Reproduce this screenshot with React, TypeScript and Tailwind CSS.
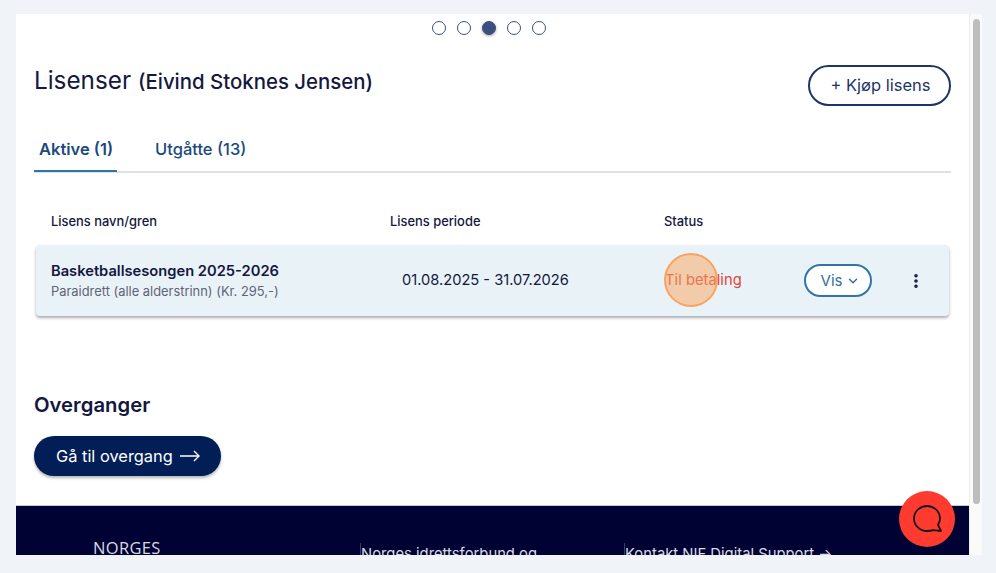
import { ChevronDown, MoreVertical } from 'lucide-react';

const font = { fontFamily: 'Inter, sans-serif' };

function StepDots() {
    return (
        <div className="flex justify-center gap-[11px] pt-[7px] pr-[7px]">
            {[0, 1, 2, 3, 4].map(i => (
                <div
                    key={i}
                    className={`w-[14px] h-[14px] rounded-full border border-[#3b5080] ${i === 2 ? 'bg-[#3b5080] shadow-[0_1px_3px_rgba(0,0,0,0.35)]' : 'bg-white'}`}
                />
            ))}
        </div>
    );
}

function LicenseRow() {
    return (
        <div className="relative mx-[2px] mt-[14px] h-[71px] flex items-center rounded-[4px] bg-[#e9f2f7] shadow-[0_2px_3px_rgba(40,50,70,0.4)]">
            <div className="w-[354px] pl-[15px] shrink-0">
                <div className="text-[14.7px] leading-[20px] font-semibold text-[#14183f]">Basketballsesongen 2025-2026</div>
                <div className="text-[12.9px] leading-[18px] mt-[2px] text-[#5f6577]">Paraidrett (alle alderstrinn) (Kr. 295,-)</div>
            </div>
            <div className="w-[275px] shrink-0 pl-[12px] text-[14.65px] text-[#14183f]">01.08.2025 - 31.07.2026</div>
            <div className="w-[139px] shrink-0 text-[14.8px] text-[#e0453a]">Til betaling</div>
            <button className="flex items-center justify-center gap-[4px] w-[68px] h-[33px] pl-[5px] pt-[1px] rounded-full bg-white border-2 border-[#2f75ab] text-[15px] text-[#2f6f9f]">
                Vis
                <ChevronDown className="w-[14px] h-[14px]" strokeWidth={2.5} />
            </button>
            <MoreVertical className="w-[18px] h-[18px] ml-[35px] text-[#14183f]" strokeWidth={2.8} />
            {/* highlight marker */}
            <div className="absolute left-[628px] top-[8px] w-[54px] h-[54px] rounded-full border-2 border-[#f9a45e] bg-[#f9a45e]/50" />
        </div>
    );
}

export default function App() {
    return (
        <div style={font} className="relative w-[996px] h-[573px] overflow-hidden bg-[#f0f4f9] pl-[16px] pt-[14px]">
            <div className="flex w-[966px] h-[541px]">
                <div className="w-[953px] h-full flex flex-col overflow-hidden bg-white">
                    <StepDots />

                    <div className="flex-1 px-[18px]">
                        <div className="flex items-start justify-between mt-[21px]">
                            <h1 className="text-[24.3px] leading-[36px] mt-[6px] text-[#14183f]">
                                Lisenser <span className="text-[20.4px] font-medium">(Eivind Stoknes Jensen)</span>
                            </h1>
                            <button className="w-[143px] h-[41px] mt-[9px] pl-[2px] rounded-full border-2 border-[#1d3566] text-[16.5px] text-[#1d3566]">
                                + Kjøp lisens
                            </button>
                        </div>

                        <div className="flex mt-[24px] border-b-2 border-[#dfe1e6] h-[43px]">
                            <div className="h-[42px] w-[83px] pl-[5px] pt-[7px] border-b-2 border-[#2f75ab] text-[16.5px] font-semibold text-[#1c4a7c]">Aktive (1)</div>
                            <div className="ml-[38px] pt-[7px] text-[16.5px] font-medium text-[#1c4a7c]">Utgåtte (13)</div>
                        </div>

                        <div className="flex mt-[40px] pl-[17px] text-[12.9px] leading-[18px] font-medium text-[#14183f]">
                            <div className="w-[339px]">Lisens navn/gren</div>
                            <div className="w-[274px]">Lisens periode</div>
                            <div>Status</div>
                        </div>

                        <LicenseRow />

                        <h2 className="mt-[75px] text-[20.3px] leading-[28px] font-semibold text-[#14183f]">Overganger</h2>
                        <button className="flex items-center gap-[7px] mt-[17px] h-[40px] w-[187px] pl-[22px] rounded-full bg-[#021e57] text-[16.4px] text-white shadow-[0_2px_3px_rgba(0,0,0,0.3)]">
                            Gå til overgang
                            <svg width="20" height="12" viewBox="0 0 20 12" fill="none" stroke="currentColor" strokeWidth="1.4">
                                <path d="M0 6h19M14 1l5 5-5 5" />
                            </svg>
                        </button>
                    </div>

                    <div className="h-[50px] shrink-0 flex overflow-hidden border-t border-[#c5c8d4] bg-[#000233] text-[#d8dae6]">
                        <div className="w-[344px] pl-[77px] pt-[33px] text-[16.5px] leading-[18px] tracking-[0.02em]" style={{ fontFamily: '"Open Sans", sans-serif' }}>NORGES</div>
                        <div className="w-[264px] mt-[37px] pt-[2px] border-l border-[#3a3d63] text-[14.8px] leading-[18px]">Norges idrettsforbund og</div>
                        <div className="mt-[37px] pt-[2px] border-l border-[#3a3d63] text-[14.8px] leading-[18px]">Kontakt NIF Digital Support →</div>
                    </div>
                </div>

                {/* scrollbar */}
                <div className="w-[13px] h-full bg-[#fafafa] border-l border-[#ececec] pl-[3px] pt-[5px]">
                    <div className="w-[7px] h-[485px] rounded-full bg-[#bdbdbd]" />
                </div>
            </div>

            {/* chat bubble */}
            <div className="absolute left-[899px] top-[491px] w-[56px] h-[56px] rounded-full bg-[#ff3b30] flex items-center justify-center">
                <svg width="30" height="30" viewBox="0 0 30 30" fill="none" stroke="#14141f" strokeWidth="1.8" strokeLinejoin="round">
                    <path d="M15 2C8 2 2 7.500 2 14.500S8 27 15 27c2.200 0 4.300-.2 6-.8l8 .8-3-6.200c1.200-1.900 2-4 2-6.300C28 7.500 22 2 15 2Z" />
                </svg>
            </div>
        </div>
    );
}
